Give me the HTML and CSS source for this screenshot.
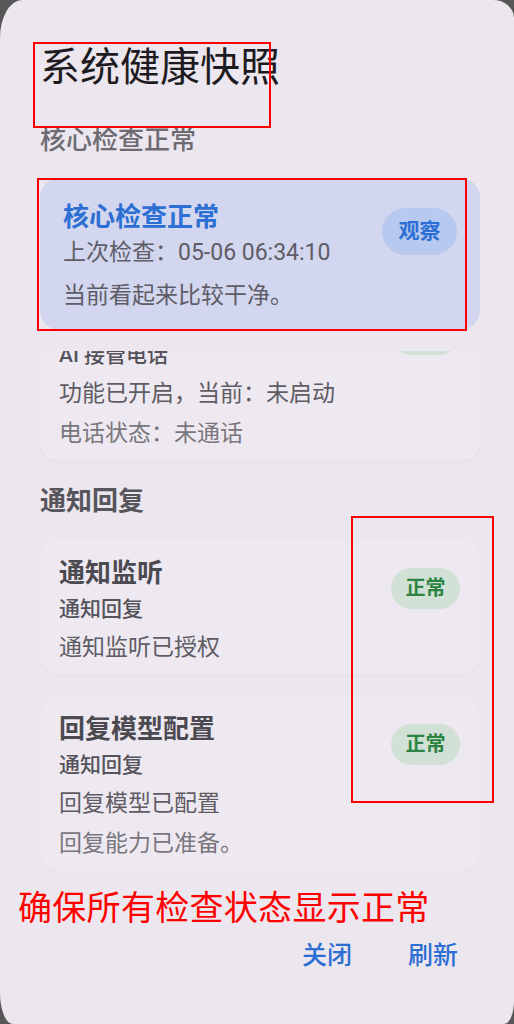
FILE: index.html
```html
<!DOCTYPE html>
<html lang="zh-CN">
<head>
<meta charset="utf-8">
<title>系统健康快照</title>
<link rel="stylesheet" href="styles.css">
</head>
<body>
<div class="screen">
  <div class="dialog">
    <h1 class="title">系统健康快照</h1>
    <div class="section-label section-label--faded">核心检查正常</div>

    <div class="card card--focus">
      <div class="card-body">
        <div class="focus-title">核心检查正常</div>
        <div class="focus-meta">上次检查：05-06 06:34:10</div>
        <div class="focus-desc">当前看起来比较干净。</div>
      </div>
      <span class="pill pill--blue">观察</span>
    </div>

    <div class="scroll">
      <div class="card card--clipped">
        <div class="card-body">
          <div class="card-title"></div>
          <div class="card-sub">AI 接管电话</div>
          <div class="card-line">功能已开启，当前：未启动</div>
          <div class="card-line card-line--muted">电话状态：未通话</div>
        </div>
        <span class="pill pill--green">正常</span>
      </div>

      <div class="section-label">通知回复</div>

      <div class="card">
        <div class="card-body">
          <div class="card-title">通知监听</div>
          <div class="card-sub">通知回复</div>
          <div class="card-line">通知监听已授权</div>
        </div>
        <span class="pill pill--green">正常</span>
      </div>

      <div class="card card--next">
        <div class="card-body">
          <div class="card-title">回复模型配置</div>
          <div class="card-sub">通知回复</div>
          <div class="card-line">回复模型已配置</div>
          <div class="card-line card-line--muted">回复能力已准备。</div>
        </div>
        <span class="pill pill--green">正常</span>
      </div>
    </div>

    <div class="actions">
      <span class="action">关闭</span>
      <span class="action">刷新</span>
    </div>

    <div class="mark mark--title"></div>
    <div class="mark mark--focus"></div>
    <div class="mark mark--pills"></div>
    <div class="note">确保所有检查状态显示正常</div>
  </div>
</div>
</body>
</html>
```

FILE: styles.css
```css
* { box-sizing: border-box; }

html, body {
  margin: 0;
  padding: 0;
}

body {
  background: #575757;
  font-family: Roboto, "Noto Sans CJK SC", sans-serif;
}

.screen {
  width: 514px;
  height: 1024px;
  background: #575757;
  overflow: hidden;
}

.dialog {
  position: relative;
  width: 514px;
  height: 1024px;
  background: #ece6ee;
  border-radius: 22px 21px 10px 13px / 38px 18px 23px 31px;
  padding: 0 34px 0 40px;
  display: flex;
  flex-direction: column;
}

.title {
  margin: 48px 0 0 0;
  font-size: 40px;
  line-height: 40px;
  font-weight: 400;
  color: #1d1b20;
}

.section-label {
  margin: 27px 0 25px 0;
  font-size: 26px;
  line-height: 26px;
  font-weight: 700;
  color: #57555c;
}

.section-label--faded {
  margin-top: 39px;
  font-weight: 500;
  color: #6d6a72;
}

.card {
  display: flex;
  align-items: flex-start;
  justify-content: space-between;
  background: #eee9f1;
  border-radius: 20px;
  padding: 17px 20px 7px 19px;
  box-shadow: 0 1px 3px rgba(60, 40, 70, 0.04);
}

.card--next { margin-top: 20px; }

.card--focus {
  flex: none;
  background: #d2d6ef;
  padding: 22px 23px 14px 23px;
  margin-bottom: 21px;
  box-shadow: none;
}

.card-body {
  display: flex;
  flex-direction: column;
}

.focus-title {
  font-size: 26px;
  line-height: 34px;
  font-weight: 700;
  color: #2c6fd4;
}

.focus-meta {
  font-size: 23px;
  line-height: 38px;
  color: #5e5c66;
}

.focus-desc {
  margin-top: 4px;
  font-size: 23px;
  line-height: 40px;
  color: #5e5c66;
}

.scroll {
  flex: none;
  overflow: hidden;
  display: flex;
  flex-direction: column;
}

.card--clipped { margin-top: -66px; }

.card-title {
  height: 34px;
  font-size: 26px;
  line-height: 34px;
  font-weight: 700;
  color: #4c4a51;
}

.card-sub {
  font-size: 21px;
  line-height: 38px;
  font-weight: 500;
  color: #54525a;
}

.card-line {
  font-size: 23px;
  line-height: 40px;
  color: #5f5c64;
}

.card-line--muted { color: #79767d; }

.pill {
  flex: none;
  border-radius: 999px;
  font-weight: 700;
  text-align: center;
}

.pill--blue {
  margin-top: 8px;
  width: 75px;
  height: 47px;
  line-height: 47px;
  font-size: 21px;
  background: #b8c9ef;
  color: #2c6fd4;
}

.pill--green {
  margin-top: 12px;
  width: 69px;
  height: 41px;
  line-height: 41px;
  font-size: 20px;
  background: #d2e1d6;
  color: #2b8442;
}

.actions {
  margin: 72px 22px 0 0;
  display: flex;
  justify-content: flex-end;
  gap: 56px;
}

.action {
  font-size: 25px;
  line-height: 25px;
  font-weight: 500;
  color: #2c6fd4;
}

.mark {
  position: absolute;
  border: 2px solid #ff0000;
}

.mark--title { left: 33px; top: 42px; width: 238px; height: 86px; }
.mark--focus { left: 37px; top: 178px; width: 430px; height: 153px; }
.mark--pills { left: 351px; top: 516px; width: 143px; height: 287px; }

.note {
  position: absolute;
  left: 18px;
  top: 891px;
  font-size: 34px;
  line-height: 34px;
  letter-spacing: 0.3px;
  color: #ff0000;
  font-weight: 400;
  white-space: nowrap;
}
```
